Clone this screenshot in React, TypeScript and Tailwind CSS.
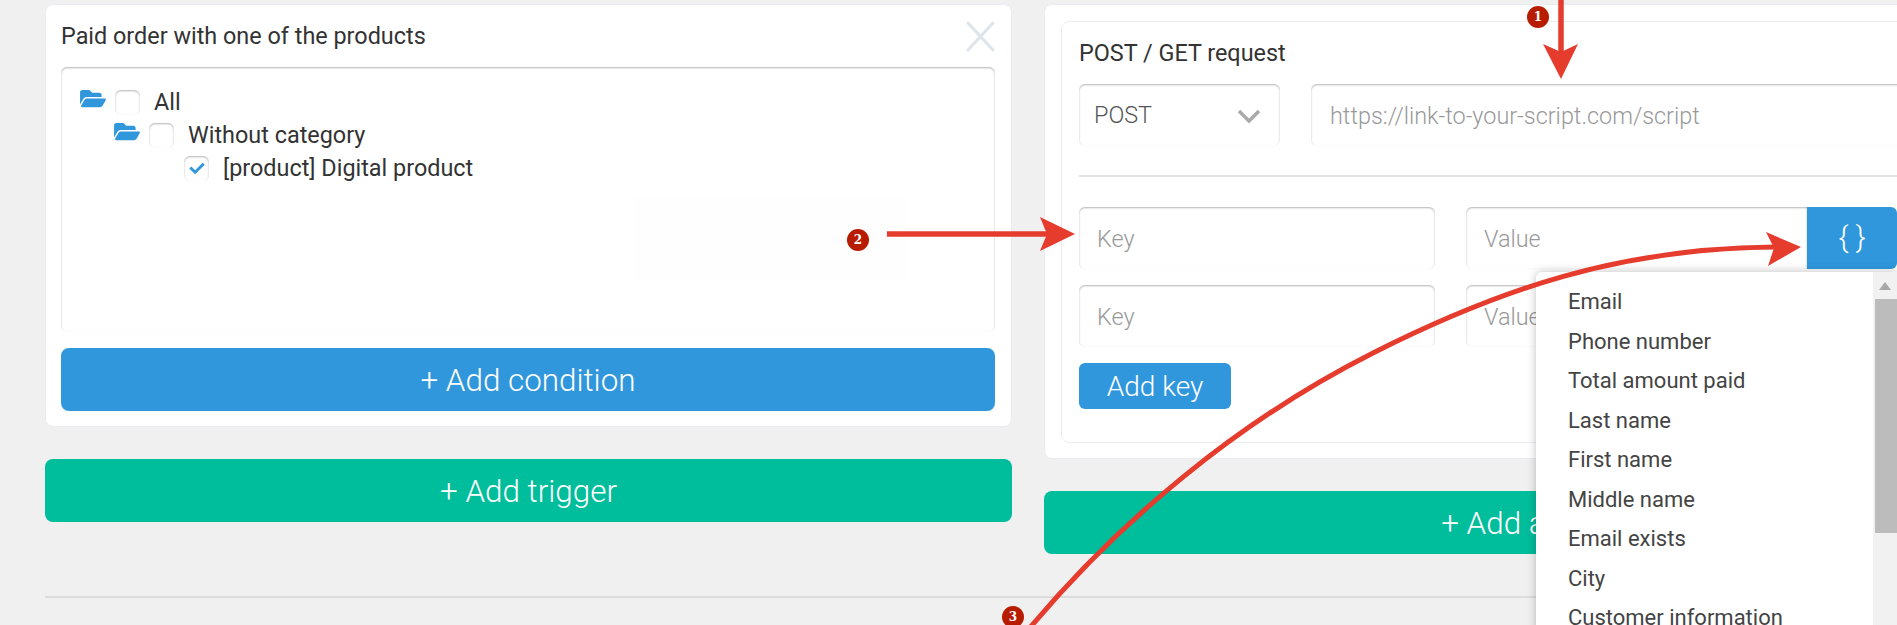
import React from "react";
import { FaCheck, FaFolderOpen } from "react-icons/fa";

const tokens = [
  "Email",
  "Phone number",
  "Total amount paid",
  "Last name",
  "First name",
  "Middle name",
  "Email exists",
  "City",
  "Customer information",
];

const inputClass =
  "h-[62px] rounded-md bg-white px-[15px] pt-[2px] text-[23.4px] font-light text-[#555] shadow-[inset_0_1px_2px_rgba(0,0,0,0.3)] outline-none placeholder:text-[#999]";

function TreeRow({ indent, label, checked, folder }: { indent: string; label: string; checked?: boolean; folder?: boolean }) {
  return (
    <div className={`flex h-[33px] items-center ${indent}`}>
      {folder && <FaFolderOpen className="mb-[9px] mr-[9px] h-[23px] w-[26px] text-[#3097dd]" />}
      <span className="mr-[14px] flex h-[25px] w-[25px] items-center justify-center rounded-md bg-white shadow-[inset_0_1px_2px_rgba(0,0,0,0.3)]">
        {checked && <FaCheck className="h-[15px] w-[18px] text-[#3097dd]" />}
      </span>
      <span className="text-[23.4px] text-[#333]">{label}</span>
    </div>
  );
}

function Badge({ n, className }: { n: number; className: string }) {
  return (
    <div className={`absolute flex h-[22px] w-[22px] items-center justify-center rounded-full bg-[#b71c00] font-['DejaVu_Serif',serif] text-[12px] font-bold text-white ${className}`}>
      {n}
    </div>
  );
}

export default function App() {
  return (
    <div className="relative h-[625px] w-[1897px] overflow-hidden bg-[#f0f0f0] font-['Roboto',sans-serif]">
      <div className="flex gap-[32px] pl-[45px] pt-[4px]">
        {/* Left column: trigger */}
        <div className="w-[967px] shrink-0">
          <div className="relative rounded-lg border border-[#e9edf1] bg-white pb-[15px] pl-[15px] pr-[16px]">
            <div className="flex h-[62px] items-center justify-between pt-[2px]">
              <span className="text-[23.4px] text-[#333]">Paid order with one of the products</span>
              <svg width="29" height="31" viewBox="0 0 29 31" className="mb-[2px]">
                <path d="M2 2 L27 29 M27 2 L2 29" stroke="#dde5ea" strokeWidth="3" strokeLinecap="round" />
              </svg>
            </div>
            <div className="relative h-[265px] rounded-md bg-white pl-[19px] pt-[19px] shadow-[inset_0_1px_2px_rgba(0,0,0,0.3)]">
              <TreeRow indent="" label="All" folder />
              <TreeRow indent="pl-[34px]" label="Without category" folder />
              <TreeRow indent="pl-[104px]" label="[product] Digital product" checked />
              <div className="absolute left-[573px] top-[130px] h-[83px] w-[272px] bg-[#fefefe]" />
            </div>
            <button className="mt-[16px] h-[63px] w-full rounded-lg bg-[#3097dd] pt-[2px] text-[31.4px] font-light text-white">
              + Add condition
            </button>
          </div>
          <button className="mt-[32px] h-[63px] w-full rounded-lg bg-[#00bd9b] pt-[2px] text-[31.4px] font-light text-white">
            + Add trigger
          </button>
        </div>

        {/* Right column: action */}
        <div className="w-[967px] shrink-0">
          <div className="rounded-lg border border-[#e9edf1] bg-white px-[16px] pb-[15px] pt-[16px]">
            <div className="rounded-lg border border-[#e9edf1] bg-white px-[17px] pb-[33px]">
              <div className="flex h-[62px] items-center pt-[2px] text-[23.4px] text-[#333]">POST / GET request</div>
              <div className="flex gap-[31px]">
                <div className={`${inputClass} flex w-[201px] items-center justify-between`}>
                  <span>POST</span>
                  <svg width="24" height="15" viewBox="0 0 24 15" className="mr-[4px]">
                    <path d="M2 2 L12 12 L22 2" fill="none" stroke="#aaa" strokeWidth="3.5" />
                  </svg>
                </div>
                <input className={`${inputClass} flex-1 pl-[19px] placeholder:text-[#777]`} placeholder="https://link-to-your-script.com/script" />
              </div>
              <div className="mt-[29px] h-[2px] bg-[#e2e2e2]" />
              <div className="mt-[30px] flex gap-[31px]">
                <input className={`${inputClass} w-[356px] pl-[18px]`} placeholder="Key" />
                <div className="flex w-[431px]">
                  <input className={`${inputClass} w-[341px] rounded-r-none pl-[18px]`} placeholder="Value" />
                  <div className="flex h-[62px] w-[90px] items-center justify-center rounded-r-md bg-[#3097dd] pb-[3px] text-[30px] font-light text-white">
                    {"{ }"}
                  </div>
                </div>
              </div>
              <div className="mt-[16px] flex gap-[31px]">
                <input className={`${inputClass} w-[356px] pl-[18px]`} placeholder="Key" />
                <input className={`${inputClass} w-[341px] pl-[18px]`} placeholder="Value" />
              </div>
              <button className="mt-[16px] block h-[46px] w-[152px] rounded-md bg-[#3097dd] pt-[1px] text-[28px] font-light text-white">
                Add key
              </button>
            </div>
          </div>
          <button className="mt-[32px] h-[63px] w-full rounded-lg bg-[#00bd9b] pt-[2px] text-[31.4px] font-light text-white">
            + Add action
          </button>
        </div>
      </div>

      <div className="ml-[45px] mt-[42px] h-[2px] bg-[#dcdcdc]" />

      {/* Token dropdown */}
      <div className="absolute left-[1536px] top-[272px] flex h-[360px] w-[361px] rounded-tl-md bg-white shadow-[0_0_10px_rgba(0,0,0,0.25)]">
        <div className="flex-1 pl-[32px] pt-[10px]">
          {tokens.map((t) => (
            <div key={t} className="flex h-[39.5px] items-center whitespace-nowrap text-[22px] text-[#444]">
              {t}
            </div>
          ))}
        </div>
        <div className="flex w-[24px] flex-col bg-[#f1f1f1]">
          <div className="flex h-[27px] items-center justify-center">
            <svg width="12" height="8" viewBox="0 0 12 8">
              <path d="M6 0 L12 8 L0 8 Z" fill="#a8a8a8" />
            </svg>
          </div>
          <div className="ml-[2px] h-[234px] bg-[#bcbcbc]" />
        </div>
      </div>

      {/* Tutorial arrows */}
      <svg className="pointer-events-none absolute inset-0" width="1897" height="625" viewBox="0 0 1897 625">
        <path d="M1561 0 V52" stroke="#e53c2e" strokeWidth="5.5" />
        <path d="M1543 44 L1561 52 L1578 44 L1561 79 Z" fill="#e53c2e" />
        <path d="M887 234 H1050" stroke="#e53c2e" strokeWidth="5.5" />
        <path d="M1040 217 L1075 234 L1040 251 L1047 234 Z" fill="#e53c2e" />
        <path d="M1028 630 C1120 520 1240 420 1373 353 C1500 289 1620 248 1775 247" fill="none" stroke="#e53c2e" strokeWidth="5" />
        <path d="M1766 232 L1801 247 L1768 266 L1774 248 Z" fill="#e53c2e" />
      </svg>
      <Badge n={1} className="left-[1527px] top-[6px]" />
      <Badge n={2} className="left-[847px] top-[229px]" />
      <Badge n={3} className="left-[1002px] top-[606px]" />
    </div>
  );
}
